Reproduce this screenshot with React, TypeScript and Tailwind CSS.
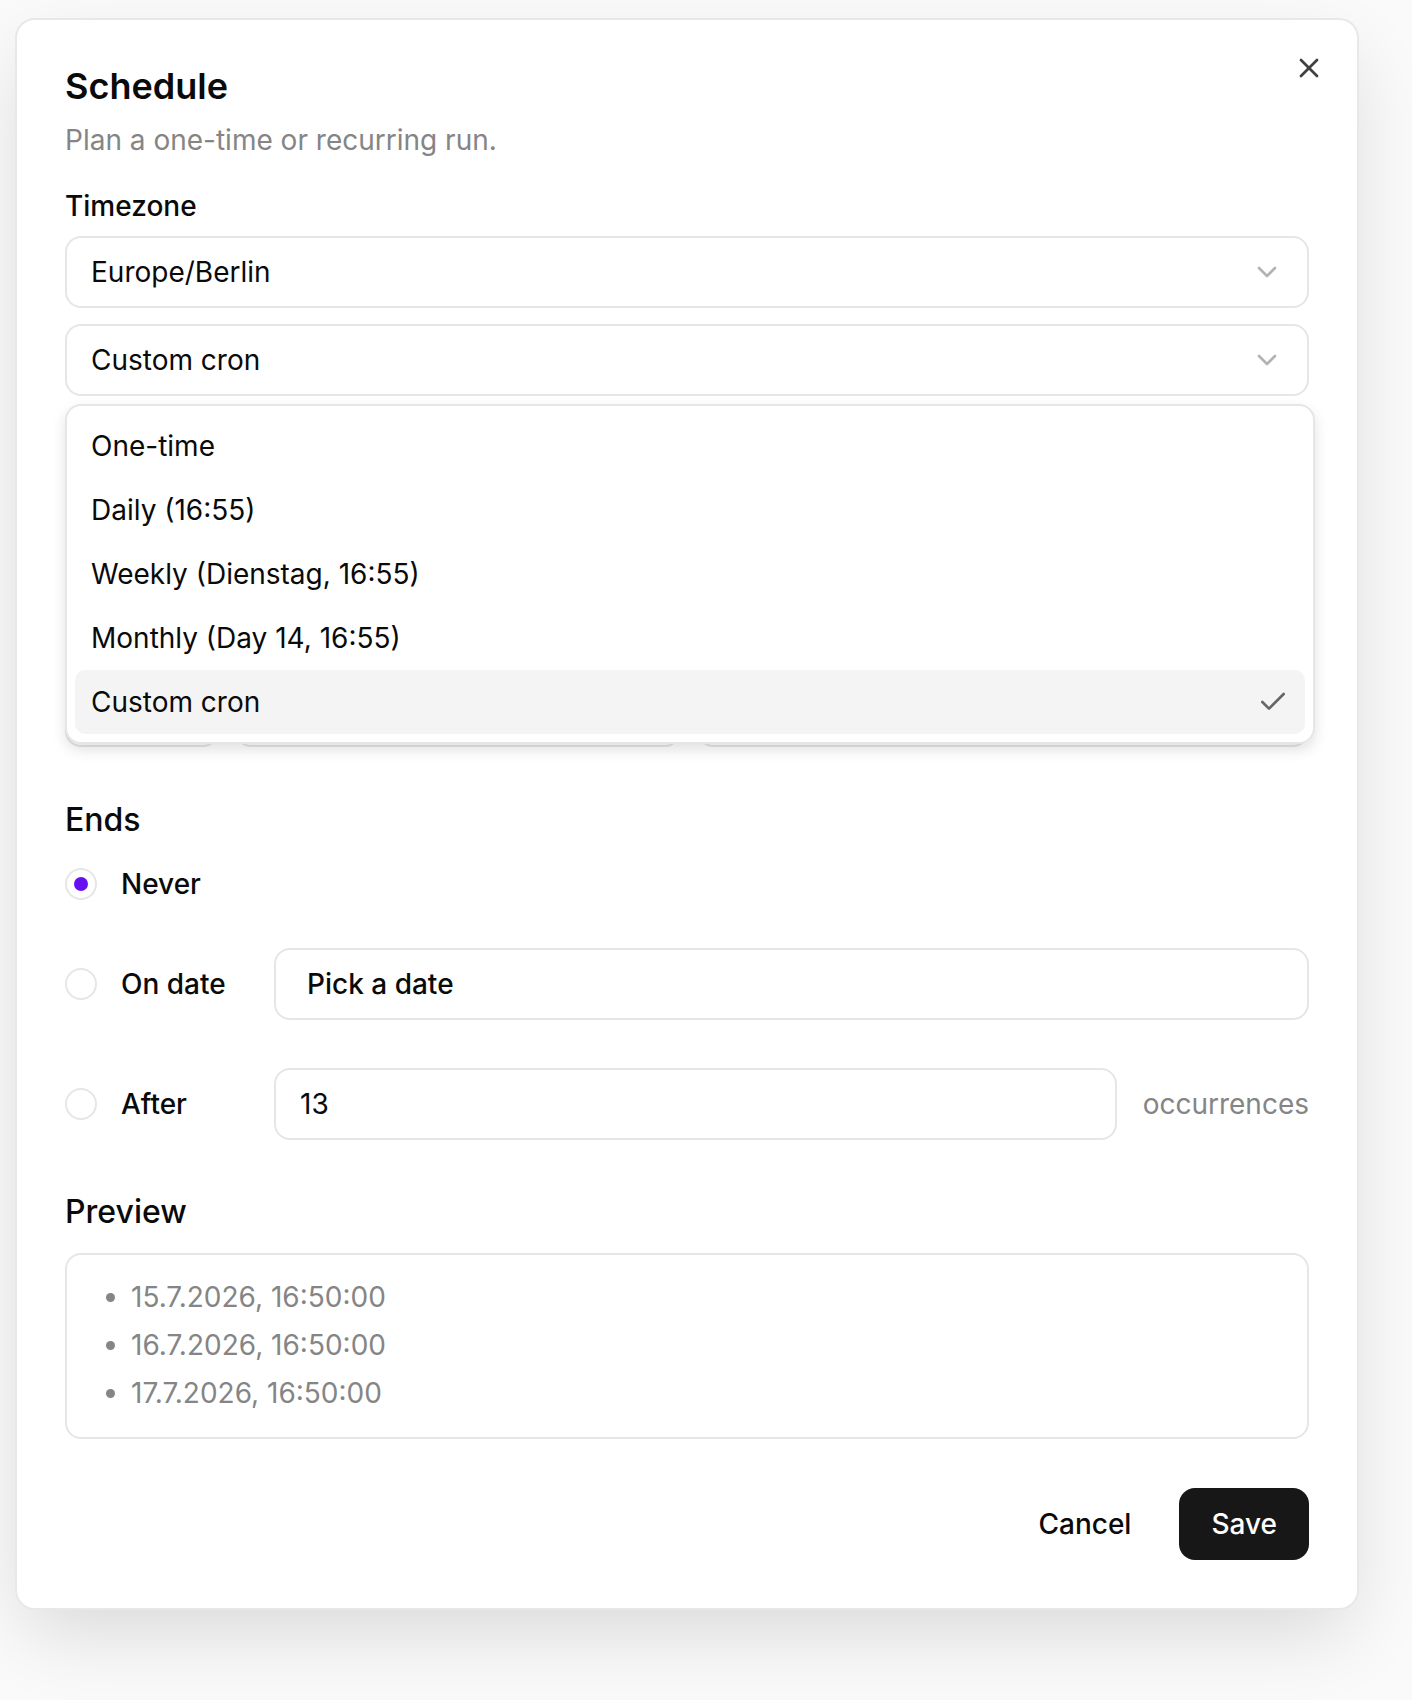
import { Check, ChevronDown, X } from "lucide-react";

const options = [
  "One-time",
  "Daily (16:55)",
  "Weekly (Dienstag, 16:55)",
  "Monthly (Day 14, 16:55)",
  "Custom cron",
];

const preview = ["15.7.2026, 16:50:00", "16.7.2026, 16:50:00", "17.7.2026, 16:50:00"];

const SelectBox = ({ value }: { value: string }) => (
  <div className="flex h-[72px] items-center justify-between rounded-[16px] border-2 border-[#e6e6e6] bg-white pl-[24px] pr-[24px] text-[28px] text-[#0a0a0a]">
    <span>{value}</span>
    <ChevronDown size={32} className="text-[#b3b3b3]" />
  </div>
);

const Radio = ({ checked }: { checked?: boolean }) => (
  <div className="flex h-[32px] w-[32px] shrink-0 items-center justify-center rounded-full border-2 border-[#e6e6e6] bg-white">
    {checked && <div className="h-[14px] w-[14px] rounded-full bg-[#6610f2]" />}
  </div>
);

export default function App() {
  return (
    <div className="min-h-[1700px] bg-[#fafafa] pl-[15px] pt-[18px] font-[Inter,'Noto_Sans',sans-serif]">
      <div className="relative w-[1344px] rounded-[20px] border-2 border-[#e8e8e8] bg-white p-[48px] shadow-[0_30px_80px_-10px_rgba(0,0,0,0.14)]">
        <button className="absolute right-[32px] top-[32px] text-[#404040]">
          <X size={32} />
        </button>

        {/* header */}
        <div className="flex flex-col gap-[16px]">
          <h2 className="text-[36px] font-semibold leading-none text-[#0a0a0a]">Schedule</h2>
          <p className="text-[28px] leading-[40px] text-[#858585]">Plan a one-time or recurring run.</p>
        </div>

        <label className="mt-[32px] block text-[28px] font-medium leading-none text-[#0a0a0a]">
          Timezone
        </label>
        <div className="mt-[16px] flex flex-col gap-[16px]">
          <SelectBox value="Europe/Berlin" />
          <div className="relative">
            <SelectBox value="Custom cron" />
            <div className="absolute left-0 top-[calc(100%+8px)] z-10 w-[1250px] rounded-[16px] border-2 border-[#e6e6e6] bg-white p-[8px] shadow-[0_6px_14px_rgba(0,0,0,0.12)]">
              {options.map((o) => {
                const active = o === "Custom cron";
                return (
                  <div
                    key={o}
                    className={`flex h-[64px] items-center justify-between rounded-[10px] pl-[16px] pr-[16px] text-[28px] text-[#0a0a0a] ${
                      active ? "bg-[#f4f4f4]" : ""
                    }`}
                  >
                    <span>{o}</span>
                    {active && <Check size={32} className="text-[#666666]" />}
                  </div>
                );
              })}
            </div>
          </div>
        </div>

        {/* cron fields, mostly under the open menu */}
        <div className="mt-[16px] h-[263px]" />
        <div className="flex gap-[16px]">
          <div className="h-[72px] w-[154px] rounded-[16px] border-2 border-[#e6e6e6]" />
          <div className="h-[72px] w-[446px] rounded-[16px] border-2 border-[#e6e6e6]" />
          <div className="h-[72px] flex-1 rounded-[16px] border-2 border-[#e6e6e6]" />
        </div>

        {/* ends */}
        <h3 className="mt-[49px] text-[32px] font-medium leading-[48px] text-[#0a0a0a]">Ends</h3>
        <div className="mt-[24px] flex flex-col gap-[48px] text-[28px]">
          <div className="flex h-[32px] items-center gap-[24px]">
            <Radio checked />
            <span className="font-medium text-[#0a0a0a]">Never</span>
          </div>
          <div className="flex items-center gap-[24px]">
            <Radio />
            <span className="w-[129px] font-medium text-[#0a0a0a]">On date</span>
            <button className="flex h-[72px] flex-1 items-center rounded-[16px] border-2 border-[#e6e6e6] bg-white px-[31px] text-left font-medium text-[#0a0a0a]">
              Pick a date
            </button>
          </div>
          <div className="flex items-center gap-[24px]">
            <Radio />
            <span className="w-[129px] font-medium text-[#0a0a0a]">After</span>
            <div className="flex flex-1 items-center gap-[26px]">
              <div className="flex h-[72px] flex-1 items-center rounded-[16px] border-2 border-[#e6e6e6] px-[24px] text-[#0a0a0a]">
                13
              </div>
              <span className="text-[#858585]">occurrences</span>
            </div>
          </div>
        </div>

        {/* preview */}
        <h3 className="mt-[48px] text-[32px] font-medium leading-[48px] text-[#0a0a0a]">Preview</h3>
        <div className="mt-[17px] rounded-[16px] border-2 border-[#e6e6e6] px-[24px] pb-[24px] pt-[22px]">
          <ul className="flex list-disc flex-col gap-[8px] pl-[40px] text-[28px] leading-[40px] text-[#858585]">
            {preview.map((p) => (
              <li key={p}>{p}</li>
            ))}
          </ul>
        </div>

        <div className="mt-[49px] flex justify-end gap-[16px] text-[28px] font-medium">
          <button className="h-[72px] rounded-[16px] px-[32px] text-[#0a0a0a]">Cancel</button>
          <button className="h-[72px] rounded-[16px] bg-[#171717] px-[32px] text-white">Save</button>
        </div>
      </div>
    </div>
  );
}
